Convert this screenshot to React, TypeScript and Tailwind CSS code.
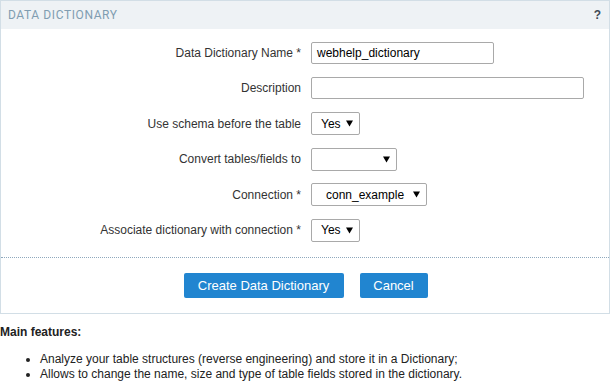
import React from "react";

const ARIAL = { fontFamily: '"Liberation Sans", Arial, sans-serif' };

function Row({ label, req, children }: { label: string; req?: boolean; children: React.ReactNode }) {
  return (
    <div className="flex items-center h-[35.5px]">
      <div className="w-[300px] text-right text-[12px] text-[#333]">
        {label}
        {req && <span className="text-[#333]"> *</span>}
      </div>
      <div className="ml-[10px] flex items-center">{children}</div>
    </div>
  );
}

function Select({ value, width, pad }: { value: string; width: number; pad: number }) {
  return (
    <div
      className="h-[23px] border border-[#a9a9a9] rounded-[2px] bg-white flex items-center justify-between text-[12px] text-black pr-[6px]"
      style={{ width, paddingLeft: pad }}
    >
      <span>{value}</span>
      <svg width="7" height="7" viewBox="0 0 7 7">
        <path d="M0 0.5 H7 L3.5 6.5 Z" fill="#000" />
      </svg>
    </div>
  );
}

export default function App() {
  return (
    <div className="w-[610px] h-[390px] bg-white" style={ARIAL}>
      {/* Form panel */}
      <div className="w-[610px] border border-[#d2dee6]">
        <div className="h-[28px] bg-[#eef2f5] flex items-center justify-between pl-[7px] pr-[8px]">
          <span
            className="text-[12px] tracking-[0.6px] text-[#7f9db1] uppercase"
            style={{ fontFamily: "Roboto, sans-serif" }}
          >
            Data Dictionary
          </span>
          <span className="text-[12px] font-bold text-[#3e4a55]">?</span>
        </div>

        <div className="pt-[6px] pb-[9px]">
          <Row label="Data Dictionary Name" req>
            <div className="w-[183px] h-[22px] border border-[#a9a9a9] rounded-[2px] flex items-center px-[5px] text-[12px] text-black">
              webhelp_dictionary
            </div>
          </Row>
          <Row label="Description">
            <div className="w-[273px] h-[22px] border border-[#a9a9a9] rounded-[2px]" />
          </Row>
          <Row label="Use schema before the table">
            <Select value="Yes" width={49} pad={9} />
          </Row>
          <Row label="Convert tables/fields to">
            <Select value="" width={86} pad={8} />
          </Row>
          <Row label="Connection" req>
            <Select value="conn_example" width={116} pad={14} />
          </Row>
          <Row label="Associate dictionary with connection" req>
            <Select value="Yes" width={49} pad={9} />
          </Row>
        </div>

        <div className="border-t border-dotted border-[#8fa8bd]" />

        <div className="flex justify-center gap-[16px] pt-[15px] pb-[15px] pl-[1px]">
          <button className="h-[25px] w-[160px] bg-[#2185d0] text-white text-[13px] rounded-[2px]">
            Create Data Dictionary
          </button>
          <button className="h-[25px] w-[68px] bg-[#2185d0] text-white text-[13px] rounded-[2px]">
            Cancel
          </button>
        </div>
      </div>

      {/* Notes */}
      <div className="text-[12px] text-[#222] pt-[11px]">
        <p className="font-bold leading-[14px]">Main features:</p>
        <ul className="list-disc pl-[40px] mt-[13px] leading-[15px]">
          <li>Analyze your table structures (reverse engineering) and store it in a Dictionary;</li>
          <li>Allows to change the name, size and type of table fields stored in the dictionary.</li>
        </ul>
      </div>
    </div>
  );
}
